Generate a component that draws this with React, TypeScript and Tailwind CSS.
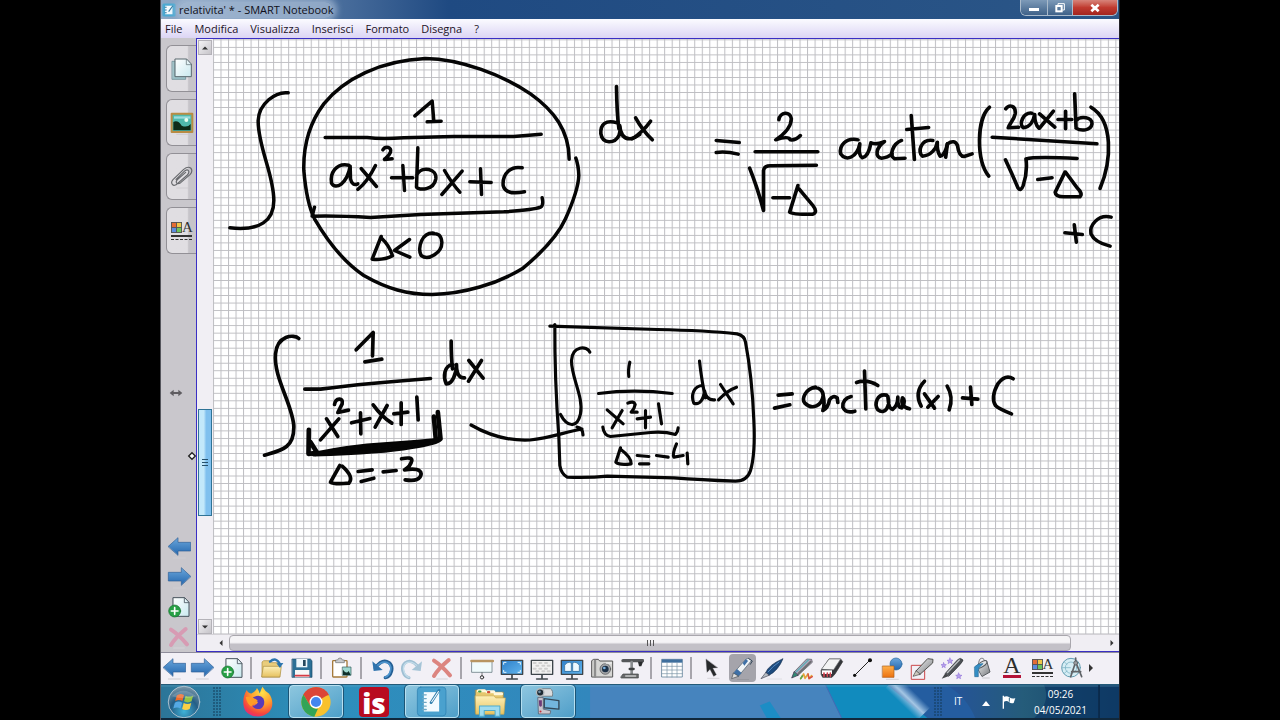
import type { ReactNode } from "react";

/* Small drawings share one coordinate system: three units to a pixel. */
function Art({ box, size = "size-6", children }: { box: string; size?: string; children: ReactNode }) {
  return (
    <svg viewBox={box} className={`${size} shrink-0`} aria-hidden="true" fill="none" strokeLinecap="round" strokeLinejoin="round">
      {children}
    </svg>
  );
}

function Defs() {
  return (
    <svg width="0" height="0" className="absolute" aria-hidden="true">
      <defs>
        <linearGradient id="blue" x1="0" y1="0" x2="0" y2="1">
          <stop offset="0" stopColor="#6ba7dc" />
          <stop offset="1" stopColor="#2467ae" />
        </linearGradient>
        <linearGradient id="paper" x1="0" y1="0" x2="1" y2="1">
          <stop offset="0" stopColor="#ffffff" />
          <stop offset="1" stopColor="#c9e9ef" />
        </linearGradient>
        <linearGradient id="screen" x1="0" y1="0" x2="1" y2="1">
          <stop offset="0" stopColor="#2d7fc8" />
          <stop offset="1" stopColor="#62b5ee" />
        </linearGradient>
        <linearGradient id="orange" x1="0" y1="0" x2="0" y2="1">
          <stop offset="0" stopColor="#ffb04a" />
          <stop offset="1" stopColor="#ec7110" />
        </linearGradient>
        <linearGradient id="folder" x1="0" y1="0" x2="0" y2="1">
          <stop offset="0" stopColor="#fdf0b8" />
          <stop offset="1" stopColor="#e7c362" />
        </linearGradient>
        <linearGradient id="metal" x1="0" y1="0" x2="1" y2="1">
          <stop offset="0" stopColor="#f4f4f4" />
          <stop offset="1" stopColor="#777a7e" />
        </linearGradient>
        <radialGradient id="orb" cx=".5" cy=".8" r=".8">
          <stop offset="0" stopColor="#3fb2d8" />
          <stop offset=".55" stopColor="#245e86" />
          <stop offset="1" stopColor="#7e98a8" />
        </radialGradient>
        <radialGradient id="fire" cx=".65" cy=".2" r=".9">
          <stop offset="0" stopColor="#ffe24a" />
          <stop offset=".45" stopColor="#ff9a2b" />
          <stop offset=".8" stopColor="#f4433f" />
          <stop offset="1" stopColor="#e0218a" />
        </radialGradient>
      </defs>
    </svg>
  );
}

const Back = () => (
  <Art box="3 76 72 72">
    <path d="M7 110L36 84V98H74V124H36V136Z" fill="url(#blue)" stroke="#2f5f96" strokeWidth="2" />
    <path d="M22 145H58" stroke="#cfcdd2" strokeWidth="3" />
  </Art>
);
const Forward = () => (
  <Art box="93 76 72 72">
    <path d="M164 110L136 84V98H97V124H136V136Z" fill="url(#blue)" stroke="#2f5f96" strokeWidth="2" />
    <path d="M112 145H148" stroke="#cfcdd2" strokeWidth="3" />
  </Art>
);
const AddPage = () => (
  <Art box="185 76 72 72">
    <path d="M204 84H238L251 98V140H204Z" fill="url(#paper)" stroke="#46525c" strokeWidth="3" />
    <path d="M237 85V99H250" stroke="#46525c" strokeWidth="2.5" />
    <circle cx="208" cy="124" r="18" fill="#27a045" stroke="#167331" strokeWidth="2" />
    <path d="M208 114V134M198 124H218" stroke="#fff" strokeWidth="5" />
  </Art>
);
const Cross = ({ color }: { color: string }) => (
  <Art box="812 74 72 72">
    <path d="M824 88C838 97 860 118 872 132M868 86C855 97 833 118 824 134" stroke={color} strokeWidth="12" />
    <path d="M832 143H864" stroke="#d5d3d8" strokeWidth="3" />
  </Art>
);
const Open = () => (
  <Art box="301 76 72 72">
    <path d="M307 138V94L312 90H330L336 96H360V138Z" fill="#e9cd7c" stroke="#a98b3b" strokeWidth="2" />
    <path d="M306 138L311 107H365L361 138Z" fill="url(#folder)" stroke="#a98b3b" strokeWidth="2" />
    <path d="M331 93Q349 77 361 101" stroke="#2a74ad" strokeWidth="7" />
    <path d="M350 98L371 97L361 112Z" fill="#2a74ad" />
  </Art>
);
const Save = () => (
  <Art box="393 76 72 72">
    <path d="M400 85H454L459 90V140H400Z" fill="#2c7096" stroke="#184563" strokeWidth="2" />
    <rect x="412" y="85" width="33" height="25" fill="#eef7fb" />
    <rect x="432" y="88" width="8" height="18" fill="#26485d" />
    <rect x="408" y="118" width="43" height="22" fill="#f7f7f7" />
    <path d="M409 135H450" stroke="#d63c45" strokeWidth="5" />
  </Art>
);
const Paste = () => (
  <Art box="518 76 72 72">
    <rect x="526" y="90" width="43" height="49" rx="2" fill="#fff" stroke="#a57a3a" strokeWidth="4" />
    <path d="M536 88H541Q542 82 548 82Q554 82 555 88H561V96H536Z" fill="#c9cbcd" stroke="#6b6e70" strokeWidth="2" />
    <rect x="556" y="109" width="25" height="25" fill="#9fd9d0" stroke="#2f5757" strokeWidth="2" />
    <path d="M557 133V117Q567 132 574 121L580 133Z" fill="#10302b" />
  </Art>
);
const Undo = () => (
  <Art box="630 76 72 72">
    <path d="M646 112Q667 83 687 96C703 109 694 138 676 141" stroke="#245f94" strokeWidth="10" />
    <path d="M646 111Q667 86 686 98C699 110 691 134 676 140" stroke="#4d94cd" strokeWidth="5" />
    <path d="M637 92L641 121L668 118Z" fill="#2f73ad" />
  </Art>
);
const Redo = () => (
  <Art box="722 76 72 72">
    <path d="M779 112Q757 83 738 96C722 109 731 138 749 141" stroke="#9fbfd3" strokeWidth="9" />
    <path d="M779 111Q757 87 739 98C726 110 734 134 749 140" stroke="#c3dcea" strokeWidth="4" />
    <path d="M788 92L784 121L757 118Z" fill="#a5c4d7" />
  </Art>
);
const ScreenShade = () => (
  <Art box="30 76 72 72">
    <rect x="36" y="92" width="60" height="33" fill="#f0fbfc" stroke="#52666e" strokeWidth="2" />
    <path d="M34 91H99" stroke="#b89562" strokeWidth="7" />
    <path d="M66 126V136" stroke="#444" strokeWidth="2" />
    <circle cx="66" cy="140" r="5" stroke="#333" strokeWidth="3" />
  </Art>
);
const Monitor = ({ kind }: { kind: "full" | "clear" | "dual" }) => (
  <Art box="120 76 72 72">
    <path d="M156 128V142M140 145H172" stroke="#3f464c" strokeWidth="5" />
    <rect x="124" y="89" width="64" height="42" fill={kind === "clear" ? "#f1f1f1" : "url(#screen)"} stroke="#3d454b" strokeWidth="4" />
    {kind === "full" && <path d="M131 101V95H138M174 95H181V101M131 119V125H138M174 125H181V119" stroke="#e4f6ff" strokeWidth="3" />}
    {kind === "clear" && <path d="M131 97H137M148 97H154M165 97H171M139 105H145M157 105H163M173 105H179M131 114H137M148 114H154M165 114H171M139 122H145M157 122H163M173 122H179" stroke="#cfcfcf" strokeWidth="6" />}
    {kind === "dual" && <path d="M134 121V104Q143 91 154 97V121ZM158 121V97Q169 91 178 104V121Z" fill="#eef9ff" stroke="#2a648f" strokeWidth="2" />}
  </Art>
);
const Camera = () => (
  <Art box="391 76 72 72">
    <path d="M396 138V90L402 86H416L420 91H459V138Z" fill="#d6d6d4" stroke="#555" strokeWidth="3" />
    <path d="M406 90V138" stroke="#8e8e8e" strokeWidth="7" />
    <circle cx="437" cy="115" r="16" fill="#a3a5a8" stroke="#4b4d50" strokeWidth="2" />
    <circle cx="437" cy="115" r="10" fill="#1d3147" />
    <circle cx="434" cy="112" r="4" fill="#7db3e1" />
    <path d="M440 97H455" stroke="#eee" strokeWidth="4" />
  </Art>
);
const DocCamera = () => (
  <Art box="481 76 72 72">
    <path d="M490 90H549" stroke="#55575a" strokeWidth="10" />
    <path d="M535 93H550L545 107H538Z" fill="#292b2d" />
    <path d="M516 94V132" stroke="#888b8e" strokeWidth="8" />
    <path d="M510 115H522" stroke="#3e4042" strokeWidth="7" />
    <path d="M484 138L490 130H536V142H485Z" fill="#68696b" stroke="#404244" strokeWidth="2" />
    <path d="M498 136H528" stroke="#c6c7c9" strokeWidth="4" />
  </Art>
);
const TableIcon = () => (
  <Art box="600 76 72 72">
    <rect x="606" y="86" width="61" height="53" fill="#fff" stroke="#446987" strokeWidth="2" />
    <rect x="606" y="86" width="61" height="10" fill="#3f6f9d" />
    <path d="M606 107H667M606 118H667M606 129H667M621 96V139M636 96V139M651 96V139" stroke="#7791a5" strokeWidth="2" />
  </Art>
);
const Pointer = () => (
  <Art box="720 76 72 72">
    <path d="M738 86L741 125L750 116L761 137L769 132L758 112L772 111Z" fill="#27292b" stroke="#454749" strokeWidth="1" />
    <path d="M743 143H777" stroke="#d6d4d9" strokeWidth="3" />
  </Art>
);
const Pen = () => (
  <Art box="810 76 72 72">
    <path d="M820 128L858 85Q866 79 875 89L835 137Z" fill="#f1f4f6" stroke="#505f6c" strokeWidth="2" />
    <path d="M820 128L831 115L845 127L835 137Z" fill="#3f70a6" />
    <path d="M848 97L858 85L864 91L853 105Z" fill="#3f70a6" />
    <path d="M866 84L877 91L871 101" stroke="#35485a" strokeWidth="3" />
    <path d="M820 128L815 144L835 137Z" fill="#ddd" stroke="#474d52" strokeWidth="2" />
    <path d="M832 147H866" stroke="#8e8e94" strokeWidth="2" />
  </Art>
);
const Brush = () => (
  <Art box="900 76 72 72">
    <path d="M917 126Q925 103 969 84Q955 119 927 134Z" fill="#1e4a7d" stroke="#17304f" strokeWidth="2" />
    <path d="M924 124Q938 107 957 94" stroke="#568ac1" strokeWidth="3" />
    <path d="M917 126L903 144L927 134Z" fill="#b6bdc4" stroke="#445" strokeWidth="2" />
    <path d="M921 145H965" stroke="#d6d4d9" strokeWidth="2" />
  </Art>
);
const Creative = () => (
  <Art box="29 76 72 72">
    <path d="M41 124L79 85L94 86L96 95L53 134Z" fill="#b8a5bd" stroke="#4d5357" strokeWidth="2" />
    <path d="M47 124L84 88" stroke="#65aeb6" strokeWidth="5" />
    <path d="M54 129L91 93" stroke="#6d6f72" strokeWidth="6" />
    <path d="M41 124L34 142L53 134Z" fill="#318a72" stroke="#324" strokeWidth="2" />
    <path d="M61 144L70 130L74 143L83 130L86 144L94 135" stroke="#e7a33b" strokeWidth="5" />
    <path d="M83 130L86 144L96 138" stroke="#d64e43" strokeWidth="4" />
    <path d="M61 144L66 136" stroke="#5aa84c" strokeWidth="5" />
  </Art>
);
const Eraser = () => (
  <Art box="119 76 72 72">
    <path d="M123 118L146 85H181L187 93L164 130L155 140H127L123 132Z" fill="#34363a" stroke="#333" strokeWidth="2" />
    <path d="M124 115L146 85H181L160 117Z" fill="#f3f3f4" stroke="#66696c" strokeWidth="2" />
    <path d="M125 119H155V130H125Z" fill="#fff" />
    <path d="M131 127V137M141 127V137M150 127V137" stroke="#d44450" strokeWidth="5" />
  </Art>
);
const Line = () => (
  <Art box="211 76 72 72">
    <path d="M224 135L270 89" stroke="#222" strokeWidth="3" />
    <circle cx="225" cy="134" r="5" fill="#111" />
    <circle cx="271" cy="89" r="6" fill="#111" />
  </Art>
);
const Shapes = () => (
  <Art box="303 76 72 72">
    <circle cx="351" cy="100" r="18" fill="url(#blue)" stroke="#23659d" strokeWidth="2" />
    <rect x="311" y="106" width="34" height="34" fill="url(#orange)" stroke="#aa5a15" strokeWidth="2" />
    <path d="M322 146H358" stroke="#d5d3d8" strokeWidth="3" />
  </Art>
);
const ShapePen = () => (
  <Art box="389 76 72 72">
    <rect x="394" y="104" width="39" height="42" stroke="#cb4649" strokeWidth="3" />
    <path d="M407 121L442 84L458 86L457 97L419 131Z" fill="url(#metal)" stroke="#50514e" strokeWidth="3" />
    <path d="M407 121L398 137L419 131Z" fill="#ccc8bd" stroke="#464644" strokeWidth="2" />
  </Art>
);
const MagicPen = () => (
  <Art box="481 76 72 72">
    <path d="M497 128L534 87Q543 79 550 88Q551 94 508 136Z" fill="#4d5156" stroke="#26292d" strokeWidth="2" />
    <path d="M503 126L539 88" stroke="#babdc0" strokeWidth="4" />
    <path d="M497 128L486 144L508 136Z" fill="#45474a" />
    <path d="M511 82L514 88L520 89L515 93L517 99L511 95L505 99L507 93L502 89L508 88ZM492 96L494 101L500 102L495 106L497 111L492 108L487 111L489 106L484 102L490 101ZM537 127L540 133L547 134L541 138L543 144L537 141L531 144L533 138L528 134L534 133Z" fill="#b5a0eb" stroke="#8a69d7" strokeWidth="1.5" />
  </Art>
);
const Fill = () => (
  <Art box="571 76 72 72">
    <path d="M596 103Q598 83 605 83Q615 81 617 99" stroke="#77797d" strokeWidth="3" />
    <path d="M593 110L621 91L631 124L608 137Z" fill="url(#metal)" stroke="#575b5f" strokeWidth="3" />
    <ellipse cx="607" cy="101" rx="17" ry="7" transform="rotate(-34 607 101)" fill="#e3e5e7" stroke="#575b5f" strokeWidth="3" />
    <path d="M585 108Q594 98 610 99L599 110Q594 118 596 138H586Z" fill="#348dc4" stroke="#246b99" strokeWidth="2" />
    <path d="M609 142H629" stroke="#c9c9ce" strokeWidth="3" />
  </Art>
);
const Measure = () => (
  <Art box="843 76 72 72">
    <circle cx="876" cy="111" r="28" fill="#d6edf4" stroke="#639db2" strokeWidth="3" />
    <circle cx="876" cy="111" r="17" stroke="#70aabe" strokeWidth="2" />
    <path d="M850 111H874M856 94L864 101M856 128L864 121" stroke="#70aabe" strokeWidth="2" />
    <path d="M890 82V94M890 94L875 138M890 94L908 138M878 123H905" stroke="#606468" strokeWidth="5" />
    <circle cx="890" cy="97" r="6" fill="#9a9da0" stroke="#4e5254" strokeWidth="2" />
  </Art>
);
const Properties = () => (
  <span className="flex w-[21px] flex-col">
    <span className="flex h-3 items-center justify-between">
      <Art box="0 0 12 12" size="size-[11px]">
        <path d="M0 0H12V12H0Z" fill="#555" />
        <path d="M1 1H5.500V5.500H1Z" fill="#e46c36" />
        <path d="M6.500 1H11V5.500H6.500Z" fill="#f0c646" />
        <path d="M1 6.500H5.500V11H1Z" fill="#5c8de0" />
        <path d="M6.500 6.500H11V11H6.500Z" fill="#6ac45d" />
      </Art>
      <span className="font-['Liberation_Serif',serif] text-[15px] leading-3 text-[#333]">A</span>
    </span>
    <span className="mt-0.5 border-t-2 border-[#333]" />
    <span className="mt-0.5 border-t border-dashed border-[#333]" />
  </span>
);
const TextStyle = () => (
  <span className="flex w-[18px] flex-col items-center font-['Liberation_Serif',serif] text-2xl leading-[17px] text-[#2d2d2d]">
    A<span className="mt-px h-[3px] w-full bg-[#b41237]" />
  </span>
);

type ToolDef = { name: string; icon: ReactNode; active?: boolean };
const groups: ToolDef[][] = [
  [
    { name: "Pagina precedente", icon: <Back /> },
    { name: "Pagina successiva", icon: <Forward /> },
    { name: "Aggiungi pagina", icon: <AddPage /> },
  ],
  [
    { name: "Apri", icon: <Open /> },
    { name: "Salva", icon: <Save /> },
  ],
  [{ name: "Incolla", icon: <Paste /> }],
  [
    { name: "Annulla", icon: <Undo /> },
    { name: "Ripeti", icon: <Redo /> },
    { name: "Elimina", icon: <Cross color="#dc8580" /> },
  ],
  [
    { name: "Tendina", icon: <ScreenShade /> },
    { name: "Schermo intero", icon: <Monitor kind="full" /> },
    { name: "Sfondo trasparente", icon: <Monitor kind="clear" /> },
    { name: "Doppia pagina", icon: <Monitor kind="dual" /> },
    { name: "Cattura schermo", icon: <Camera /> },
    { name: "Document camera", icon: <DocCamera /> },
  ],
  [{ name: "Tabella", icon: <TableIcon /> }],
  [
    { name: "Seleziona", icon: <Pointer /> },
    { name: "Penne", icon: <Pen />, active: true },
    { name: "Penna calligrafica", icon: <Brush /> },
    { name: "Penne creative", icon: <Creative /> },
    { name: "Gomma", icon: <Eraser /> },
    { name: "Linee", icon: <Line /> },
    { name: "Forme", icon: <Shapes /> },
    { name: "Penna per forme", icon: <ShapePen /> },
    { name: "Penna magica", icon: <MagicPen /> },
    { name: "Riempimento", icon: <Fill /> },
    { name: "Testo", icon: <TextStyle /> },
    { name: "Proprietà", icon: <Properties /> },
    { name: "Strumenti di misura", icon: <Measure /> },
  ],
];

function Toolbar() {
  return (
    <div className="flex h-8 shrink-0 items-center overflow-hidden border-t border-[#8f8d9b] bg-[#f2f0f6] pb-0.5">
      {groups.map((group, i) => (
        <div key={i} className="flex shrink-0 items-center">
          {i > 0 && <span className="mr-[5px] ml-[3px] h-[22px] w-0.5 bg-[#a7a5ac]" />}
          {group.map((tool, j) => (
            <button
              key={tool.name}
              aria-label={tool.name}
              className={`flex h-7 items-center justify-center ${i === 0 && j === 0 ? "w-[26px]" : "w-[30px]"}`}
            >
              <span className={`flex h-7 w-[27px] shrink-0 items-center justify-center rounded-sm ${tool.active ? "bg-[#a5a4ab]" : ""}`}>{tool.icon}</span>
            </button>
          ))}
        </div>
      ))}
      <button aria-label="Altri strumenti" className="flex h-6 w-2 items-center justify-center">
        <svg viewBox="0 0 4 8" className="h-2 w-1">
          <path d="M0 0L4 4L0 8Z" fill="#333" />
        </svg>
      </button>
    </div>
  );
}

const tabs: ToolDef[] = [
  {
    name: "Ordinamento pagine",
    icon: (
      <Art box="30 52 72 72">
        <path d="M37 65H77V119H37Z" fill="#9fc3c9" stroke="#5e848c" strokeWidth="2" />
        <path d="M46 58H80L94 73V111H46Z" fill="url(#paper)" stroke="#59686e" strokeWidth="3" />
        <path d="M79 59V75H93" stroke="#59686e" strokeWidth="2" />
      </Art>
    ),
  },
  {
    name: "Galleria",
    icon: (
      <Art box="30 214 72 72">
        <rect x="35" y="222" width="62" height="55" fill="#4fb9ab" stroke="#b98c43" strokeWidth="6" />
        <path d="M40 247Q54 240 65 258Q82 265 92 253V272H40Z" fill="#0e2c18" />
        <path d="M42 230H91V237H42Z" fill="#9bdcdc" />
        <circle cx="79" cy="241" r="6" fill="#e8fff0" />
        <path d="M50 284H88" stroke="#c4c2c8" strokeWidth="2" />
      </Art>
    ),
  },
  {
    name: "Allegati",
    icon: (
      <Art box="30 380 72 72">
        <path d="M48 423L75 397Q83 392 86 398Q88 403 82 410L53 435Q43 445 37 438Q32 432 39 424L71 393Q83 383 92 389Q100 398 90 409L62 433Q52 439 50 434Q46 429 54 422L77 402" stroke="#67696d" strokeWidth="3.5" />
        <path d="M50 449H86" stroke="#c8c6cb" strokeWidth="2" />
      </Art>
    ),
  },
  { name: "Proprietà pagina", icon: <Properties /> },
];

function Sidebar() {
  return (
    <nav className="relative flex w-[35px] shrink-0 flex-col justify-between bg-[#c9c7cc] pt-[7px]">
      <div className="flex flex-col gap-[7px] pl-[5px]">
        {tabs.map((tab) => (
          <button
            key={tab.name}
            aria-label={tab.name}
            className="flex h-[47px] items-center justify-center rounded-l-md border border-r-0 border-[#929096] bg-linear-to-r from-[#e0dee2] from-70% to-[#c6c4c9] to-75%"
          >
            {tab.icon}
          </button>
        ))}
      </div>
      <button aria-label="Sposta barra laterale" className="flex h-5 w-[30px] items-center justify-center">
        <Art box="0 0 42 24" size="h-2 w-3.5">
          <path d="M14 2L2 12L14 22ZM28 2L40 12L28 22Z" fill="#5f5d61" />
          <path d="M10 12H32" stroke="#5f5d61" strokeWidth="6" />
        </Art>
      </button>
      <div className="flex flex-col">
        {[
          { name: "Indietro", icon: <Back /> },
          { name: "Avanti", icon: <Forward /> },
          { name: "Nuova pagina", icon: <AddPage /> },
          { name: "Elimina pagina", icon: <Cross color="#d79bb3" /> },
        ].map((b) => (
          <button key={b.name} aria-label={b.name} className="flex h-[30px] items-center justify-center">
            {b.icon}
          </button>
        ))}
      </div>
      <svg viewBox="0 0 24 24" className="absolute top-[67.5%] right-0 size-2 overflow-visible" aria-hidden="true">
        <path d="M12 2L22 12L12 22L2 12Z" fill="#fff" stroke="#222" strokeWidth="4" />
      </svg>
    </nav>
  );
}

const inkA = [
  "M203 157C165 152 115 190 113 240C112 320 160 400 160 480C160 540 120 572 28 562",
  "M1046 356C1046 270 1000 210 930 160C850 105 720 55 615 54C480 60 370 115 310 190C265 250 248 320 250 390C255 450 265 500 282 535C320 600 370 665 430 705C500 745 560 762 635 762C730 760 830 730 905 685C960 640 1010 590 1035 535C1055 490 1074 440 1075 405Q1074 375 1066 353",
  "M583 226L635 182L640 243M620 244L662 242",
  "M314 291L440 291Q480 297 550 292L700 288L880 288L962 281",
  "M385 374C345 366 328 400 333 428C345 450 380 430 389 377L390 415Q395 438 412 430",
  "M422 384L468 438M465 375Q440 425 412 447",
  "M487 328C495 315 515 320 510 335C505 350 490 355 492 357L515 355",
  "M513 412H577M547 375L552 450",
  "M592 322L588 440M589 402C605 375 650 385 646 415C640 450 595 450 588 440",
  "M672 390Q695 430 718 455M725 392L664 462",
  "M748 424L812 426M780 385L783 462",
  "M905 382C870 375 845 400 848 435Q855 465 912 454",
  "M282 500L275 527Q350 525 450 531L600 522L850 514Q940 508 960 500Q970 495 965 472",
  "M482 588L455 656Q490 660 516 646Q506 614 484 594",
  "M567 597L522 630L568 650",
  "M640 578C605 575 590 620 602 645C625 662 665 635 664 605C662 585 655 578 632 579",
];
const inkB = [
  "M105 78Q106 160 112 205M107 187C75 177 58 190 60 220C65 252 100 250 112 225Q118 205 114 195Q118 237 145 235Q160 232 172 222",
  "M160 172Q180 210 208 238M203 182Q180 215 150 235",
  "M392 240L458 246M392 276Q420 272 455 281",
  "M572 178C575 155 605 150 608 175C608 205 575 230 563 238Q600 225 605 238Q620 240 634 225",
  "M504 274H684",
  "M488 323Q510 380 528 450L528 330Q530 315 550 316L680 314",
  "M555 412H603",
  "M627 375L603 455Q605 463 670 461Q685 455 670 435L630 385",
  "M800 238C765 230 745 255 750 280C765 305 797 290 805 250Q800 285 812 292Q830 288 837 247Q850 254 876 243C850 262 848 292 868 293Q885 292 898 280",
  "M925 240C900 250 888 285 905 295L935 293",
  "M953 165L962 297M940 207L1003 201",
  "M1015 240C980 235 970 275 985 287C1010 285 1025 265 1028 245Q1026 270 1036 287Q1050 284 1057 250",
  "M1052 290L1057 250Q1078 235 1086 255Q1090 288 1105 288L1128 280",
  "M1178 140C1140 175 1140 300 1176 347",
  "M1225 145C1235 130 1255 135 1252 160C1248 180 1235 190 1232 202L1262 200",
  "M1300 158C1275 155 1262 190 1275 202C1295 200 1305 180 1308 162Q1308 190 1320 203",
  "M1322 160L1366 200M1362 152L1322 203",
  "M1375 177H1415M1397 152V205",
  "M1423 100L1427 200M1427 180C1440 165 1475 170 1473 190C1470 212 1440 212 1427 203",
  "M1186 230Q1300 238 1487 250",
  "M1224 298Q1245 345 1260 382Q1268 395 1275 375Q1288 335 1283 295Q1310 288 1430 294",
  "M1317 357L1358 352",
  "M1395 335L1367 395Q1368 410 1395 409L1438 409Q1448 400 1430 382L1397 335",
  "M1470 140C1535 180 1530 300 1496 384",
  "M1395 517L1445 522M1422 493L1428 545",
  "M1528 470C1490 460 1465 495 1470 520Q1480 545 1525 557",
];
const inkC = [
  "M145 84C130 70 80 75 75 130C68 200 130 290 130 350C130 415 90 420 42 434",
  "M317 118L368 66L366 136M343 154L394 146",
  "M163 236L210 236Q350 218 540 204",
  "M602 92Q602 140 606 175M607 162C580 165 578 200 587 220C605 222 618 190 618 162Q618 204 642 202",
  "M655 150L698 203M693 150L654 212",
  "M228 325L262 378M265 325L210 388",
  "M252 282C255 262 280 260 275 280Q265 300 262 306L294 299",
  "M303 337L358 324M330 307L331 370",
  "M368 283Q395 320 424 338M410 285L374 350",
  "M430 310L472 305M452 277V342",
  "M499 260L503 328",
  "M268 465L240 515Q250 522 295 518Q312 500 275 467",
  "M323 483L365 478M332 513L370 503M398 484L437 480",
  "M453 445Q485 438 484 450Q480 468 462 478Q510 470 512 490Q510 515 464 508",
];
const inkD = [
  "M28 47L350 57Q500 60 590 70Q612 75 615 95Q635 200 640 330Q645 430 630 480Q620 512 585 512Q480 508 400 502L200 497Q150 502 80 500Q62 490 58 465L55 380Q42 200 43 42",
  "M148 125C140 105 95 105 93 150C92 200 130 260 120 310C110 355 80 350 60 312",
  "M268 155Q262 180 265 198M174 249Q280 235 395 249",
  "M200 298L248 340M245 300L215 352",
  "M262 278Q280 270 284 282Q282 295 272 305L290 305",
  "M290 325L330 320M315 300V352M354 280L363 340",
  "M187 350Q190 375 210 378L330 366Q370 362 405 372Q412 365 413 352",
  "M240 412L226 455Q235 465 272 460Q272 440 242 418",
  "M290 435L325 438M297 460H325M348 435L383 440",
  "M408 400Q395 430 400 440L428 435M440 428L442 460",
  "M477 152Q484 215 495 262M487 225C460 225 450 255 460 278C478 285 490 265 492 240Q497 270 522 268",
  "M540 222L578 280M588 230Q560 240 534 268",
];
const inkE = [
  "M53 134L95 130M42 173L88 163",
  "M165 110C135 115 122 145 133 158C155 180 185 165 188 135C188 120 175 110 160 112M188 135Q194 160 187 180Q203 172 207 148Q218 132 230 142L232 156",
  "M272 138Q245 145 247 170Q255 190 283 182",
  "M312 62L316 175M288 96Q320 85 352 105",
  "M378 134C350 128 340 160 352 178C375 195 390 165 382 138Q384 175 396 177Q412 165 412 140Q410 172 424 172Q438 150 426 142Q418 168 447 175",
  "M492 92Q460 125 482 167M492 130L522 173M533 138L502 170",
  "M560 107Q580 140 566 178M606 142L652 146M630 110L634 162",
  "M758 85Q735 70 712 100Q690 140 705 165Q715 175 753 190",
];

function Strokes({ paths, transform, width }: { paths: string[]; transform: string; width: number }) {
  return (
    <g transform={transform} strokeWidth={width}>
      {paths.map((d) => (
        <path key={d} d={d} />
      ))}
    </g>
  );
}

function Canvas() {
  return (
    <svg
      viewBox="213 39 907 595"
      preserveAspectRatio="xMinYMin slice"
      role="img"
      aria-label="Appunti a mano: integrali di 1/(ax²+bx+c) e arcotangente"
      className="min-w-0 flex-1 bg-white"
    >
      <defs>
        <pattern id="grid" x="220.500" y="46.900" width="7.520" height="7.520" patternUnits="userSpaceOnUse">
          <path d="M0.500 0V7.520M0 0.500H7.520" stroke="#bebec2" strokeWidth="1" />
        </pattern>
      </defs>
      <rect x="213" y="39" width="907" height="595" fill="url(#grid)" />
      <g fill="none" stroke="#050505" strokeLinecap="round" strokeLinejoin="round">
        <Strokes paths={inkA} transform="translate(220.500 40.500) scale(.33333)" width={10.5} />
        <Strokes paths={inkB} transform="translate(580 60.500) scale(.3476 .33333)" width={10.5} />
        <Strokes paths={inkC} transform="translate(250.500 310.500) scale(.33333)" width={11} />
        <Strokes
          paths={[
            "M175 358L174 430L200 427L180 395",
            "M195 430Q300 408 400 402Q480 397 550 390",
            "M190 431Q400 424 480 409Q560 398 570 385L562 305",
            "M550 318L556 388M250 421L500 397",
          ]}
          transform="translate(250.500 310.500) scale(.33333)"
          width={14}
        />
        <Strokes paths={inkD} transform="translate(540.500 310.500) scale(.33333)" width={9.5} />
        <Strokes paths={inkE} transform="translate(760.500 350.500) scale(.33333)" width={11} />
        <path d="M471 425C490 436 510 441 530 440C550 438 565 432 582 429M577 427Q583 428 583 435" strokeWidth="3.200" />
      </g>
    </svg>
  );
}

function Arrow({ d }: { d: string }) {
  return (
    <svg viewBox="0 0 8 8" className="size-1.5" aria-hidden="true">
      <path d={d} fill="#333" />
    </svg>
  );
}

function Workspace() {
  return (
    <main className="flex min-w-0 flex-1 flex-col border-y border-l border-[#3a2fc4] bg-[#f0eef3]">
      <div className="flex flex-1">
        <div className="flex w-4 shrink-0 flex-col items-center bg-[#f1eff4] px-px pt-px">
          <button aria-label="Scorri su" className="flex h-[15px] w-full items-center justify-center border border-[#b4b2b8] bg-linear-to-br from-[#f4f3f5] to-[#c6c4c9]">
            <Arrow d="M0 6L4 2L8 6Z" />
          </button>
          <div className="grow-[355] basis-0" />
          <div className="flex w-full grow-[106] basis-0 flex-col items-center justify-center gap-px border border-[#2f7396] bg-linear-to-r from-[#c2e8fa] from-40% to-[#7fc0ee] to-60%">
            <span className="h-px w-1.5 bg-[#24506c]" />
            <span className="mt-px h-px w-1.5 bg-[#24506c]" />
            <span className="mt-px h-px w-1.5 bg-[#24506c]" />
          </div>
          <div className="grow-[103] basis-0" />
          <button aria-label="Scorri giù" className="flex h-[15px] w-full items-center justify-center border border-[#b4b2b8] bg-linear-to-br from-[#f4f3f5] to-[#c6c4c9]">
            <Arrow d="M0 2L4 6L8 2Z" />
          </button>
        </div>
        <Canvas />
      </div>
      <div className="flex h-[17px] shrink-0 items-stretch border-t border-[#d3d1d6] pl-4">
        <button aria-label="Scorri a sinistra" className="flex w-4 items-center justify-center">
          <Arrow d="M6 0L2 4L6 8Z" />
        </button>
        <div className="flex flex-1 items-center justify-center gap-px rounded-sm border border-[#a9a7ad] bg-linear-to-b from-[#f5f4f6] from-45% to-[#c3c1c7] to-60%">
          <span className="h-1.5 w-px bg-[#555]" />
          <span className="ml-px h-1.5 w-px bg-[#555]" />
          <span className="ml-px h-1.5 w-px bg-[#555]" />
        </div>
        <button aria-label="Scorri a destra" className="flex w-12 items-center justify-end pr-1">
          <Arrow d="M2 0L6 4L2 8Z" />
        </button>
      </div>
    </main>
  );
}

function TitleBar() {
  return (
    <header className="flex h-[19px] shrink-0 justify-between bg-linear-to-r from-[#8fa9c6] via-[#1f4a82] via-30% to-[#2b5687]">
      <div className="flex items-center gap-[3px] pl-px">
        <svg viewBox="0 0 36 36" className="size-3.5" aria-hidden="true">
          <rect x="1" y="1" width="34" height="34" rx="4" fill="#4ca9d2" />
          <path d="M8 7H27V29H8Z" fill="#f4fbff" />
          <path d="M7 11H12M7 18H12M7 25H12M17 22L28 7" stroke="#31799f" strokeWidth="3" />
        </svg>
        <h1 className="rounded-full bg-[#a9bdd6]/70 text-[11px] leading-4 whitespace-nowrap text-[#10101a] shadow-[0_0_6px_4px_rgba(169,189,214,0.7)]">
          relativita&apos; * - SMART Notebook
        </h1>
      </div>
      <div className="mr-px flex h-4 overflow-hidden rounded-b-md border border-t-0 border-[#a9bacb]">
        <button aria-label="Riduci a icona" className="flex w-[26px] items-center justify-center bg-linear-to-b from-[#7d9ab8] to-[#3f6289]">
          <span className="mt-1 h-[3px] w-2.5 bg-white" />
        </button>
        <button aria-label="Ripristina" className="flex w-[26px] items-center justify-center border-x border-[#a9bacb] bg-linear-to-b from-[#7d9ab8] to-[#3f6289]">
          <svg viewBox="0 0 30 30" className="size-2.5" fill="none" stroke="#fff" aria-hidden="true">
            <path d="M9 7V2H28V21H22" strokeWidth="3" />
            <rect x="4" y="9" width="16" height="16" strokeWidth="6" />
          </svg>
        </button>
        <button aria-label="Chiudi" className="flex w-11 items-center justify-center bg-linear-to-b from-[#d7837a] via-[#c03a30] to-[#a3251e]">
          <svg viewBox="0 0 30 30" className="size-2.5" aria-hidden="true">
            <path d="M4 5L26 25M26 5L4 25" stroke="#fff" strokeWidth="8" />
          </svg>
        </button>
      </div>
    </header>
  );
}

function MenuBar() {
  return (
    <nav className="flex h-[19px] shrink-0 items-center gap-3 bg-linear-to-b from-[#fbfbff] to-[#dcd5f4] pl-1 text-[11px] leading-4 text-[#1c1226]">
      {["File", "Modifica", "Visualizza", "Inserisci", "Formato", "Disegna", "?"].map((m) => (
        <button key={m}>{m}</button>
      ))}
    </nav>
  );
}

const apps: ToolDef[] = [
  {
    name: "Firefox",
    icon: (
      <Art box="244 168 94 94" size="size-8">
        <path d="M258 180Q262 190 272 190Q286 182 288 174Q295 184 296 190Q300 178 304 170Q312 184 323 190C336 207 337 229 323 245C303 263 270 261 255 242C244 225 246 198 258 180Z" fill="url(#fire)" />
        <path d="M276 202Q296 190 307 205Q314 224 300 234Q283 240 274 226Q287 226 291 216Q281 210 276 202Z" fill="#593bb8" />
        <path d="M255 200Q276 197 291 212Q279 217 271 228Q258 219 255 200Z" fill="#ff9c25" />
      </Art>
    ),
  },
  {
    name: "Chrome",
    active: true,
    icon: (
      <Art box="420 170 94 94" size="size-8">
        <circle cx="467" cy="217" r="43" fill="#f8c12d" />
        <path d="M467 217L430 195A43 43 0 0 1 504 195Z" fill="#dc4537" />
        <path d="M467 197H505A43 43 0 0 0 430 195L450 228Z" fill="#dc4537" />
        <path d="M430 195L450 228Q460 239 473 236L462 260A43 43 0 0 1 430 195Z" fill="#33a457" />
        <circle cx="467" cy="217" r="19" fill="#fff" />
        <circle cx="467" cy="217" r="15" fill="#4486ef" />
      </Art>
    ),
  },
  {
    name: "IS",
    icon: (
      <span className="flex size-[30px] items-end justify-center rounded-sm bg-[#b80b20] font-['Open_Sans',sans-serif] text-[28px] leading-[28px] font-extrabold text-white">is</span>
    ),
  },
  {
    name: "SMART Notebook",
    active: true,
    icon: (
      <Art box="770 170 94 94" size="size-8">
        <rect x="774" y="173" width="84" height="85" rx="10" fill="#4aa1ce" stroke="#2a7daf" strokeWidth="2" />
        <path d="M793 188H838V245H793Z" fill="#f4fbff" />
        <path d="M789 196H800M789 207H800M789 218H800M789 229H800M789 239H800" stroke="#6fa8c4" strokeWidth="4" />
        <path d="M838 182L814 219" stroke="#2f7fae" strokeWidth="8" />
        <path d="M836 186L816 216" stroke="#fff" strokeWidth="3" />
      </Art>
    ),
  },
  {
    name: "Esplora risorse",
    icon: (
      <Art box="45 170 94 94" size="size-8">
        <path d="M50 182H79L84 188H131V250H50Z" fill="#e5c76d" stroke="#a98d47" strokeWidth="2" />
        <path d="M58 184H76M83 187H103M107 193H126" stroke="#fff8dc" strokeWidth="9" />
        <path d="M60 186H64" stroke="#3e9e45" strokeWidth="6" />
        <path d="M86 188H90" stroke="#d34937" strokeWidth="6" />
        <path d="M49 199H103L109 205H137L133 253H51Z" fill="url(#folder)" stroke="#c9a850" strokeWidth="2" />
        <path d="M61 259V229H121V259H107V242H75V259Z" fill="#9fdcf0" stroke="#4faccf" strokeWidth="3" />
      </Art>
    ),
  },
  {
    name: "Videocamera",
    active: true,
    icon: (
      <Art box="219 168 94 94" size="size-8">
        <path d="M249 176H273Q282 181 279 198H245Z" fill="#dadcde" stroke="#626669" strokeWidth="2" />
        <circle cx="243" cy="187" r="11" fill="#1e2a33" stroke="#b5babd" strokeWidth="4" />
        <circle cx="241" cy="185" r="4" fill="#6f8ea5" />
        <path d="M237 202H252V236L274 241L272 250H239Z" fill="#c9c5ce" stroke="#595460" strokeWidth="2" />
        <path d="M239 210H248V226Q244 232 240 225Z" fill="#6d3b79" />
        <path d="M255 205L298 211V236L255 232Z" fill="#73b6dd" stroke="#344959" strokeWidth="4" />
        <circle cx="244" cy="243" r="3" fill="#c72e39" />
      </Art>
    ),
  },
];

function Grip() {
  return (
    <svg viewBox="0 0 8 30" className="h-[30px] w-2 shrink-0" aria-hidden="true">
      <path d="M1 0V30M4 0V30M7 0V30" stroke="#123a56" strokeWidth="1" strokeDasharray="2 1" />
    </svg>
  );
}

function Taskbar() {
  return (
    <footer className="relative isolate flex h-9 shrink-0 items-stretch overflow-hidden border-t border-b-2 border-t-[#245a78] border-b-[#10283c] bg-[#4684be]">
      <svg viewBox="0 0 960 34" preserveAspectRatio="none" className="absolute inset-0 -z-10 size-full" aria-hidden="true">
        <defs>
          <linearGradient id="barA">
            <stop offset="0" stopColor="#2c7598" />
            <stop offset=".35" stopColor="#2d8fbc" />
            <stop offset="1" stopColor="#3287bd" />
          </linearGradient>
          <linearGradient id="barB">
            <stop offset="0" stopColor="#25539b" />
            <stop offset=".45" stopColor="#255c7a" />
            <stop offset="1" stopColor="#123f68" />
          </linearGradient>
          <linearGradient id="beam">
            <stop offset="0" stopColor="#8fbbe0" stopOpacity="0" />
            <stop offset=".5" stopColor="#a4c6e4" />
            <stop offset="1" stopColor="#8fbbe0" stopOpacity="0" />
          </linearGradient>
        </defs>
        <rect width="960" height="34" fill="#4684be" />
        <rect width="430" height="34" fill="url(#barA)" />
        <path d="M600 21L610 17L621 34H607Z" fill="#1c8dc5" />
        <path d="M666 0H760L785 34H682Z" fill="#118bbe" />
        <path d="M666 0L682 34" stroke="#4468b4" />
        <path d="M728 0H960V34H768Z" fill="#245da0" />
        <path d="M-9 0H9V46H-9Z" transform="translate(732 -3) rotate(-45)" fill="url(#beam)" />
        <path d="M786 0H960V34H816Q806 10 786 0Z" fill="url(#barB)" />
        <path d="M875 34Q892 18 885 0H960V34Z" fill="#0e3864" opacity=".75" />
        <path d="M0 1H960" stroke="#70b2cf" strokeWidth="1" opacity=".45" />
        <path d="M940 0V34" stroke="#0a2745" strokeWidth="1.500" />
      </svg>
      <button aria-label="Start" className="flex w-[46px] shrink-0 items-center justify-center">
        <Art box="0 0 108 108" size="size-[34px]">
          <circle cx="54" cy="54" r="50" fill="url(#orb)" stroke="#afc4d0" strokeWidth="3" />
          <path d="M31 33Q42 24 54 32L49 51Q38 44 26 51Z" fill="#ee6b2d" />
          <path d="M59 34Q71 40 83 33L78 52Q66 59 54 52Z" fill="#94c545" />
          <path d="M25 56Q37 49 48 56L43 75Q32 68 20 75Z" fill="#55a9e4" />
          <path d="M53 57Q65 64 77 57L72 76Q60 83 48 76Z" fill="#fbd044" />
          <path d="M15 36Q50 0 93 36Q54 48 15 36" fill="#fff" opacity=".18" />
        </Art>
      </button>
      <span className="flex w-6 items-center pl-1.5">
        <Grip />
      </span>
      <div className="flex gap-1">
        {apps.map((app) => (
          <button
            key={app.name}
            aria-label={app.name}
            className={`flex w-[54px] items-center justify-center ${
              app.active ? "rounded-sm border border-[#b6dff0] bg-linear-to-br from-[#a5d5e8]/80 to-[#55a4cc]/80 shadow-[0_0_0_1px_#1c5576]" : ""
            }`}
          >
            {app.icon}
          </button>
        ))}
      </div>
      <div className="ml-auto flex items-center pr-8 text-[10px] text-white">
        <Grip />
        <span className="ml-3 w-5">IT</span>
        <button aria-label="Mostra icone nascoste" className="ml-1.5 flex w-3 justify-center">
          <svg viewBox="0 0 8 5" className="mt-1 h-[5px] w-2" aria-hidden="true">
            <path d="M0 5L4 0L8 5Z" fill="#fff" />
          </svg>
        </button>
        <button aria-label="Centro operativo" className="ml-2.5 flex w-4">
          <svg viewBox="0 0 42 42" className="size-3.5" aria-hidden="true">
            <path d="M4 2V41" stroke="#fff" strokeWidth="4" />
            <path d="M6 5Q15 1 22 7Q31 13 40 9L35 24Q27 27 21 21Q14 16 6 20Z" fill="#fff" />
            <path d="M22 8V20" stroke="#356980" strokeWidth="3" />
          </svg>
        </button>
        <time className="ml-4 flex flex-col items-center leading-4" dateTime="2021-05-04T09:26">
          <span>09:26</span>
          <span>04/05/2021</span>
        </time>
      </div>
    </footer>
  );
}

export default function App() {
  return (
    <div className="flex min-h-screen bg-black px-[12.5%] font-['Open_Sans','Noto_Sans',sans-serif]">
      <Defs />
      <div className="flex min-w-0 flex-1 flex-col border-x border-[#55555c] border-r-[#222228] bg-[#f0eef3]">
        <TitleBar />
        <MenuBar />
        <div className="flex flex-1">
          <Sidebar />
          <Workspace />
        </div>
        <Toolbar />
        <Taskbar />
      </div>
    </div>
  );
}
